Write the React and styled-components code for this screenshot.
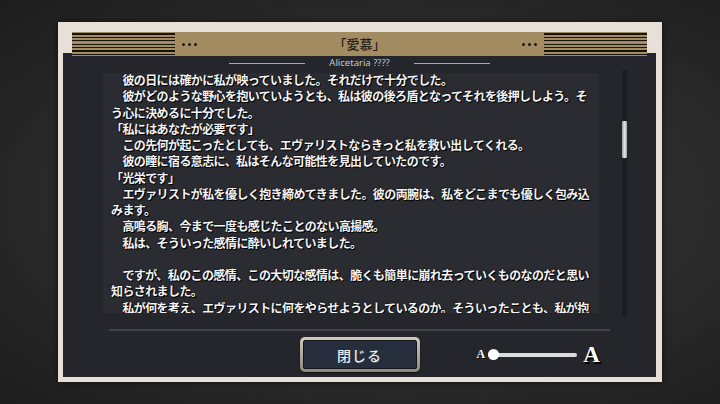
import React from "react";
import styled, { createGlobalStyle } from "styled-components";

const GlobalStyle = createGlobalStyle`
  html, body {
    margin: 0;
    padding: 0;
    background: #262626;
  }
  #root {
    width: 720px;
    height: 404px;
  }
`;

const lines = [
  "　彼の日には確かに私が映っていました。それだけで十分でした。",
  "　彼がどのような野心を抱いていようとも、私は彼の後ろ盾となってそれを後押ししよう。そう心に決めるに十分でした。",
  "「私にはあなたが必要です」",
  "　この先何が起こったとしても、エヴァリストならきっと私を救い出してくれる。",
  "　彼の瞳に宿る意志に、私はそんな可能性を見出していたのです。",
  "「光栄です」",
  "　エヴァリストが私を優しく抱き締めてきました。彼の両腕は、私をどこまでも優しく包み込みます。",
  "　高鳴る胸、今まで一度も感じたことのない高揚感。",
  "　私は、そういった感情に酔いしれていました。",
  "",
  "　ですが、私のこの感情、この大切な感情は、脆くも簡単に崩れ去っていくものなのだと思い知らされました。",
  "　私が何を考え、エヴァリストに何をやらせようとしているのか。そういったことも、私が抱いていた想いも、彼には関係のないことだったのです。",
];

const App = () => {
  return (
    <Page>
      <GlobalStyle />
      <Frame>
        <Header>
          <Stripes />
          <Dots>
            <Dot />
            <Dot />
            <Dot />
          </Dots>
          <Title>「愛慕」</Title>
          <Dots>
            <Dot />
            <Dot />
            <Dot />
          </Dots>
          <Stripes />
        </Header>
        <Panel>
          <Subtitle>
            <Rule />
            <SubText>Alicetaria ????</SubText>
            <Rule />
          </Subtitle>
          <Body>
            <TextBox>
              <TextFlow>
                {lines.map((line, i) => (
                  <Para key={i}>{line || "\u00a0"}</Para>
                ))}
              </TextFlow>
            </TextBox>
            <Track>
              <Thumb />
            </Track>
          </Body>
          <Separator />
          <Footer>
            <span />
            <CloseButton>
              <CloseInner>閉じる</CloseInner>
            </CloseButton>
            <SizeControl>
              <SmallA>A</SmallA>
              <SliderLine>
                <Knob />
              </SliderLine>
              <BigA>A</BigA>
            </SizeControl>
          </Footer>
        </Panel>
      </Frame>
    </Page>
  );
};

export default App;

const Page = styled.div`
  width: 720px;
  height: 404px;
  display: flex;
  align-items: center;
  justify-content: center;
  background: radial-gradient(
    ellipse at 55% 50%,
    #3a3a3a 0%,
    #2e2e2e 45%,
    #1d1d1d 100%
  );
  overflow: hidden;
`;

const Frame = styled.div`
  width: 604px;
  height: 360px;
  box-sizing: border-box;
  padding: 10px 6px 5px 5px;
  background: #e6e0d8;
  box-shadow: 0 0 6px rgba(0, 0, 0, 0.6);
  display: flex;
  flex-direction: column;
`;

const Header = styled.div`
  position: relative;
  z-index: 1;
  height: 24px;
  margin: 0 9px;
  background: #a38b62;
  display: flex;
  align-items: center;
`;

const Stripes = styled.div`
  width: 103px;
  height: 24px;
  background: repeating-linear-gradient(
    to bottom,
    #a38b62 0px,
    #a38b62 1.2px,
    #17130e 1.2px,
    #17130e 2.6px,
    #a38b62 2.6px,
    #a38b62 3.45px
  );
`;

const Dots = styled.div`
  display: flex;
  gap: 3px;
  padding: 0 7px;
`;

const Dot = styled.span`
  width: 3px;
  height: 3px;
  border-radius: 50%;
  background: #1e1a14;
`;

const Title = styled.div`
  flex: 1;
  text-align: center;
  font-family: "Noto Sans CJK JP", sans-serif;
  font-size: 13px;
  font-weight: 500;
  color: #2a2217;
  line-height: 24px;
`;

const Panel = styled.div`
  flex: 1;
  margin-top: -3px;
  background: #25262b;
  box-sizing: border-box;
  padding: 4px 0 5px;
  display: flex;
  flex-direction: column;
`;

const Subtitle = styled.div`
  height: 12px;
  display: flex;
  align-items: center;
  justify-content: center;
  gap: 24px;
`;

const Rule = styled.div`
  width: 76px;
  height: 1px;
  background: #a9a9a9;
`;

const SubText = styled.div`
  font-family: "Noto Sans", sans-serif;
  font-size: 9.5px;
  color: #c6c6c6;
  line-height: 12px;
`;

const Body = styled.div`
  margin-top: 4px;
  height: 240px;
  display: flex;
  padding-left: 40px;
`;

const TextBox = styled.div`
  width: 496px;
  height: 240px;
  box-sizing: border-box;
  padding: 0 8px;
  background: #2b2c31;
  overflow: hidden;
`;

const TextFlow = styled.div`
  margin-top: -1px;
  width: 480px;
  font-family: "Noto Sans CJK JP", sans-serif;
  font-size: 12px;
  letter-spacing: -0.6px;
  font-weight: 700;
  line-height: 16.25px;
  color: #f4f4f4;
  text-shadow: 1px 1px 0 #000, 0 0 2px #000;
`;

const Para = styled.div`
  line-break: strict;
`;

const Track = styled.div`
  margin: -3px 0 -3px 23px;
  width: 5px;
  background: #1c1d21;
  display: flex;
  flex-direction: column;
`;

const Thumb = styled.div`
  margin-top: 51px;
  height: 37px;
  background: linear-gradient(to right, #9a9a9a, #e2e2e2 50%, #a5a5a5);
  border-radius: 1px;
`;

const Separator = styled.div`
  margin: 16px 46px 0;
  height: 2px;
  background: #41454c;
`;

const Footer = styled.div`
  margin-top: 6px;
  display: grid;
  grid-template-columns: 1fr auto 1fr;
  align-items: center;
`;

const CloseButton = styled.div`
  width: 120px;
  height: 35px;
  box-sizing: border-box;
  padding: 3px;
  border-radius: 5px;
  background: linear-gradient(to bottom, #d2ccbe, #a9a498 60%, #8a877c);
  box-shadow: 0 1px 2px rgba(0, 0, 0, 0.6);
`;

const CloseInner = styled.div`
  height: 100%;
  box-sizing: border-box;
  border: 1px solid #14161b;
  border-radius: 2px;
  background: #262d3d;
  display: flex;
  align-items: center;
  justify-content: center;
  font-family: "Noto Sans CJK JP", sans-serif;
  font-size: 14px;
  font-weight: 500;
  color: #eeeeee;
  letter-spacing: 1px;
`;

const SizeControl = styled.div`
  display: flex;
  align-items: center;
  margin-left: 57px;
`;

const SmallA = styled.span`
  font-family: "Liberation Serif", serif;
  font-weight: 700;
  font-size: 12px;
  color: #ffffff;
  text-shadow: 1px 1px 0 #000;
  margin-right: 3px;
`;

const SliderLine = styled.div`
  width: 89px;
  height: 4px;
  border-radius: 2px;
  background: #dcdcdc;
  display: flex;
  align-items: center;
`;

const Knob = styled.div`
  width: 11px;
  height: 11px;
  border-radius: 50%;
  background: #ffffff;
`;

const BigA = styled.span`
  font-family: "Liberation Serif", serif;
  font-weight: 700;
  font-size: 23px;
  line-height: 1;
  color: #ffffff;
  text-shadow: 1px 1px 0 #000, 2px 2px 0 #000;
  margin-left: 6px;
`;
